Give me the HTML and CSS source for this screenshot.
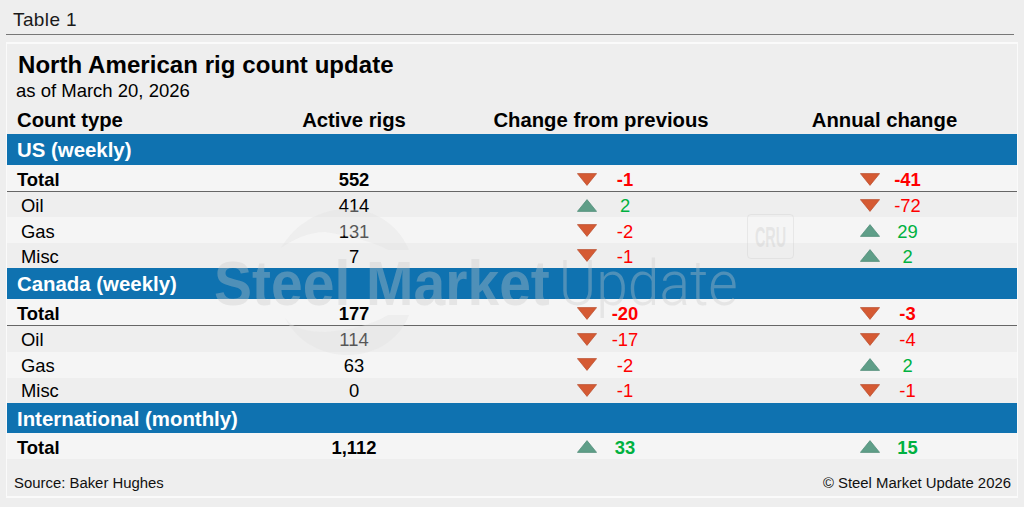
FILE: index.html
```html
<!DOCTYPE html>
<html lang="en">
<head>
<meta charset="utf-8">
<title>Table 1</title>
<link rel="stylesheet" href="styles.css">
</head>
<body>
<svg class="defs" width="0" height="0" aria-hidden="true">
  <symbol id="down" viewBox="0 0 20 13"><path d="M.4 .6H19.6L10 12.4Z" fill="#d55a33" stroke="#b84c2c" stroke-width=".7"/></symbol>
  <symbol id="up" viewBox="0 0 20 13"><path d="M.4 12.4H19.6L10 .6Z" fill="#5f9e88" stroke="#4c8a75" stroke-width=".7"/></symbol>
</svg>
<header class="caption">Table 1</header>
<main class="panel">
  <h1 class="title">North American rig count update</h1>
  <p class="asof">as of March 20, 2026</p>
  <div class="row head">
    <div class="label">Count type</div><div class="num">Active rigs</div><div class="hchg">Change from previous</div><div class="hann">Annual change</div>
  </div>
  <div class="band">US (weekly)</div>
  <div class="row total ruled light"><div class="label">Total</div><div class="num">552</div><div class="chg"><svg class="ar"><use href="#down"/></svg><span class="v neg">-1</span></div><div class="ann"><svg class="ar"><use href="#down"/></svg><span class="v neg">-41</span></div></div>
  <div class="row"><div class="label sub">Oil</div><div class="num">414</div><div class="chg"><svg class="ar"><use href="#up"/></svg><span class="v pos">2</span></div><div class="ann"><svg class="ar"><use href="#down"/></svg><span class="v neg">-72</span></div></div>
  <div class="row light"><div class="label sub">Gas</div><div class="num">131</div><div class="chg"><svg class="ar"><use href="#down"/></svg><span class="v neg">-2</span></div><div class="ann"><svg class="ar"><use href="#up"/></svg><span class="v pos">29</span></div></div>
  <div class="row"><div class="label sub">Misc</div><div class="num">7</div><div class="chg"><svg class="ar"><use href="#down"/></svg><span class="v neg">-1</span></div><div class="ann"><svg class="ar"><use href="#up"/></svg><span class="v pos">2</span></div></div>
  <div class="band">Canada (weekly)</div>
  <div class="row total ruled light"><div class="label">Total</div><div class="num">177</div><div class="chg"><svg class="ar"><use href="#down"/></svg><span class="v neg">-20</span></div><div class="ann"><svg class="ar"><use href="#down"/></svg><span class="v neg">-3</span></div></div>
  <div class="row roomy"><div class="label sub">Oil</div><div class="num">114</div><div class="chg"><svg class="ar"><use href="#down"/></svg><span class="v neg">-17</span></div><div class="ann"><svg class="ar"><use href="#down"/></svg><span class="v neg">-4</span></div></div>
  <div class="row roomy light"><div class="label sub">Gas</div><div class="num">63</div><div class="chg"><svg class="ar"><use href="#down"/></svg><span class="v neg">-2</span></div><div class="ann"><svg class="ar"><use href="#up"/></svg><span class="v pos">2</span></div></div>
  <div class="row roomy"><div class="label sub">Misc</div><div class="num">0</div><div class="chg"><svg class="ar"><use href="#down"/></svg><span class="v neg">-1</span></div><div class="ann"><svg class="ar"><use href="#down"/></svg><span class="v neg">-1</span></div></div>
  <div class="band slim">International (monthly)</div>
  <div class="row total short light"><div class="label">Total</div><div class="num">1,112</div><div class="chg"><svg class="ar"><use href="#up"/></svg><span class="v pos">33</span></div><div class="ann"><svg class="ar"><use href="#up"/></svg><span class="v pos">15</span></div></div>
  <footer class="foot"><span>Source: Baker Hughes</span><span>© Steel Market Update 2026</span></footer>
  <svg class="mark-ring" viewBox="7 44 1010 452" aria-hidden="true">
    <path d="M281 248C295 224 320 209 347 209C378 209 400 228 409 250H388C372 241 350 236 325 232C308 232 292 240 281 248Z"/>
    <path d="M285 318C292 328 308 332 325 332C350 330 372 325 388 315H409C400 338 378 355 347 355C320 355 296 340 285 318Z"/>
  </svg>
  <div class="mark-text"><b>Steel Market</b> <span>Update</span></div>
  <div class="mark-cru"><span>CRU</span></div>
</main>
</body>
</html>
```
FILE: styles.css
```css
* { box-sizing: border-box; }
html, body { margin: 0; height: 507px; overflow: hidden; }
body { background: #eeeeee; font-family: "Liberation Sans", Arial, sans-serif; color: #000; position: relative; }
.defs { position: absolute; }
.caption { margin: 0 10px 0 6px; height: 35px; padding: 9px 0 0 7px; font-size: 19px; line-height: 21px; letter-spacing: .4px; color: #1a1a1a; border-bottom: 1px solid #777; }
.panel { position: relative; margin: 7px 6px 0 6px; height: 456px; border: 2px solid #fafafa; border-left-width: 1px; border-right-width: 1px; background: #eeeeee; overflow: hidden; }
.title { margin: 0; padding: 7px 0 0 11px; height: 34px; font-size: 24px; line-height: 27px; font-weight: 700; letter-spacing: .06px; }
.asof { margin: 0; padding: 2px 0 0 9px; height: 23px; font-size: 18.5px; line-height: 22px; }
.row { display: grid; grid-template-columns: 233px 228px 266px 283px; align-items: center; height: 25.4px; padding-top: 3px; font-size: 18.4px; line-height: 20px; background: #eeeeee; }
.row.roomy { height: 25.7px; padding-top: 2px; }
.row.light { background: #f5f5f5; }
.row.head { height: 33px; padding-top: 4px; font-size: 20.3px; font-weight: 700; }
.row.total { font-weight: 700; }
.row.ruled { height: 27px; border-bottom: 1px solid #666; }
.row.short { height: 26px; }
.label { padding-left: 10px; }
.label.sub { padding-left: 14px; font-weight: 400; }
.num { text-align: center; }
.hchg { text-align: center; }
.hann { text-align: center; padding-left: 18px; }
.chg, .ann { display: flex; justify-content: center; align-items: center; gap: 8px; }
.chg { padding-left: 20px; }
.ann { padding-left: 36px; }
.ar { width: 20px; height: 13px; flex: none; margin-top: -2px; }
.ruled .ar { margin-top: 0; }
.v { width: 40px; text-align: center; }
.neg { color: #ff0000; }
.pos { color: #00b140; }
.band { height: 31px; padding-left: 10px; background: #0f72b0; color: #fff; font-size: 20.4px; font-weight: 700; line-height: 33px; }
.band.slim { height: 30px; line-height: 32px; }
.foot { display: flex; justify-content: space-between; padding: 16px 6px 0 7px; font-size: 14.9px; line-height: 16px; color: #111; }
.mark-ring { position: absolute; left: 0; top: 0; width: 1010px; height: 452px; fill: rgba(225,225,225,.38); pointer-events: none; }
.mark-text { position: absolute; left: 207px; top: 205px; font-size: 57px; line-height: 60px; white-space: nowrap; color: rgba(200,200,200,.35); transform: scaleY(1.12); transform-origin: left top; pointer-events: none; }
.mark-text span { margin-left: -7px; font-family: Roboto, "Liberation Sans", sans-serif; font-weight: 300; }
.mark-cru { position: absolute; left: 740px; top: 170px; width: 47px; height: 45px; border: 1px solid rgba(200,200,200,.3); border-radius: 4px; display: flex; align-items: center; justify-content: center; pointer-events: none; }
.mark-cru span { display: inline-block; font-size: 30px; line-height: 30px; font-weight: 700; color: rgba(200,200,200,.35); transform: scaleX(.48); }
```
